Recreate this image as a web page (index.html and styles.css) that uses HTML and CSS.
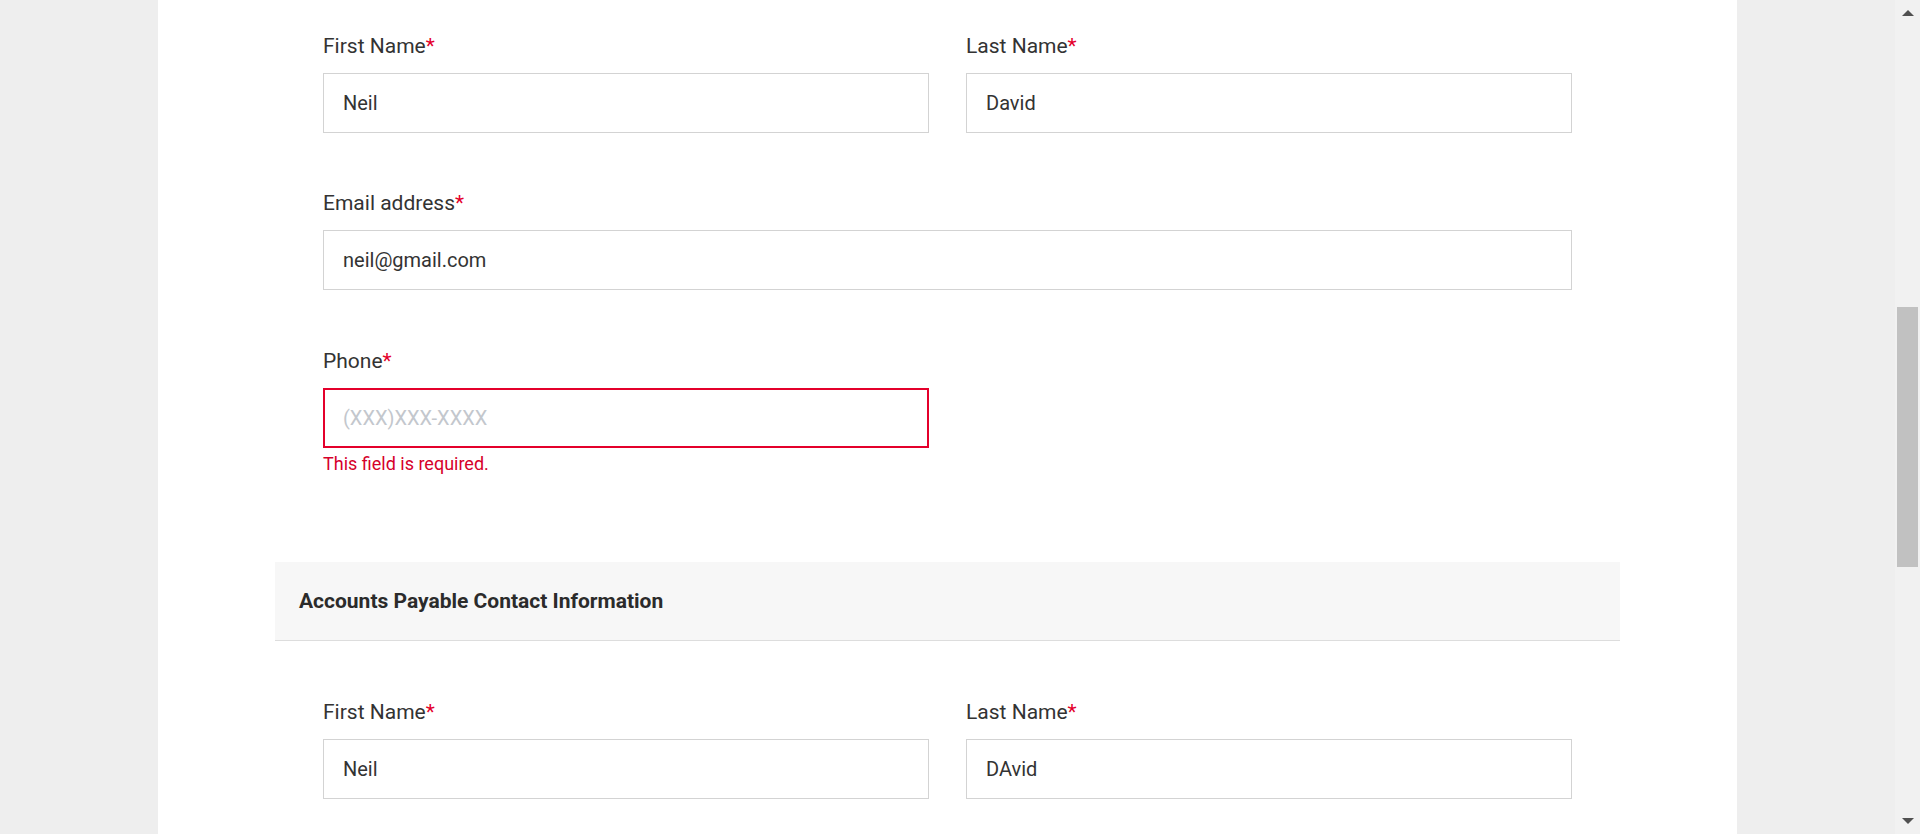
FILE: index.html
```html
<!DOCTYPE html>
<html lang="en">
<head>
<meta charset="utf-8">
<title>Contact Information</title>
<link rel="stylesheet" href="styles.css">
</head>
<body>
<div class="viewport">
  <div class="panel">
    <div class="fields">
      <div class="row two">
        <div class="field">
          <label class="label">First Name<span class="req">*</span></label>
          <input class="input" type="text" value="Neil">
        </div>
        <div class="field">
          <label class="label">Last Name<span class="req">*</span></label>
          <input class="input" type="text" value="David">
        </div>
      </div>
      <div class="row">
        <div class="field">
          <label class="label">Email address<span class="req">*</span></label>
          <input class="input" type="text" value="neil@gmail.com">
        </div>
      </div>
      <div class="row two phone">
        <div class="field">
          <label class="label">Phone<span class="req">*</span></label>
          <input class="input invalid" type="text" placeholder="(XXX)XXX-XXXX">
          <div class="error">This field is required.</div>
        </div>
      </div>
    </div>

    <div class="section-head">Accounts Payable Contact Information</div>

    <div class="fields after-head">
      <div class="row two">
        <div class="field">
          <label class="label">First Name<span class="req">*</span></label>
          <input class="input" type="text" value="Neil">
        </div>
        <div class="field">
          <label class="label">Last Name<span class="req">*</span></label>
          <input class="input" type="text" value="DAvid">
        </div>
      </div>
    </div>
  </div>
</div>
<div class="scrollbar">
  <div class="sb-btn"><span class="arrow up"></span></div>
  <div class="sb-track"><div class="sb-thumb"></div></div>
  <div class="sb-btn"><span class="arrow down"></span></div>
</div>
</body>
</html>
```

FILE: styles.css
```css
* { box-sizing: border-box; }

html, body {
  margin: 0;
  padding: 0;
  height: 834px;
  overflow: hidden;
}

body {
  display: flex;
  background: #eeeeee;
  font-family: Roboto, "Liberation Sans", Arial, sans-serif;
  color: #333333;
}

.viewport {
  flex: 1;
  height: 834px;
  overflow: hidden;
}

.panel {
  width: 1579px;
  margin: 0 auto;
  height: 834px;
  background: #ffffff;
  padding: 0 117px;
}

.fields {
  padding: 34px 48px 0;
}

.fields.after-head {
  padding-top: 59px;
}

.row {
  display: grid;
  grid-template-columns: 1fr;
  column-gap: 37px;
  margin-bottom: 58px;
}

.row.two {
  grid-template-columns: 1fr 1fr;
}

.row.phone {
  padding-top: 1px;
}

.row:last-child {
  margin-bottom: 0;
}

.field {
  display: flex;
  flex-direction: column;
}

.label {
  font-size: 21px;
  line-height: 24px;
  color: #333333;
  margin-bottom: 15px;
}

.req {
  color: #e4002b;
}

.input {
  display: block;
  width: 100%;
  height: 60px;
  border: 1px solid #d3d3d3;
  background: #ffffff;
  padding: 0 19px;
  font-family: Roboto, "Liberation Sans", Arial, sans-serif;
  font-size: 20px;
  color: #333333;
  outline: none;
  margin: 0;
  border-radius: 0;
}

.input::placeholder {
  color: #c3c7cd;
}

.input.invalid {
  border: 2px solid #e4002b;
  padding: 0 18px;
}

.error {
  margin-top: 5px;
  font-size: 18px;
  line-height: 22px;
  color: #d6002b;
}

.section-head {
  margin-top: 87px;
  height: 79px;
  background: #f7f7f7;
  border-bottom: 1px solid #dddddd;
  padding: 0 24px;
  display: flex;
  align-items: center;
  font-size: 21px;
  font-weight: 700;
  color: #2b2b2b;
}

.scrollbar {
  width: 25px;
  height: 834px;
  background: #f1f1f1;
  display: flex;
  flex-direction: column;
}

.sb-btn {
  height: 26px;
  display: flex;
  align-items: center;
  justify-content: center;
}

.arrow {
  width: 0;
  height: 0;
  border-left: 6px solid transparent;
  border-right: 6px solid transparent;
}

.arrow.up {
  border-bottom: 6px solid #505050;
}

.arrow.down {
  border-top: 6px solid #505050;
}

.sb-track {
  flex: 1;
}

.sb-thumb {
  margin: 281px 2px 0;
  height: 260px;
  background: #c1c1c1;
}
```
